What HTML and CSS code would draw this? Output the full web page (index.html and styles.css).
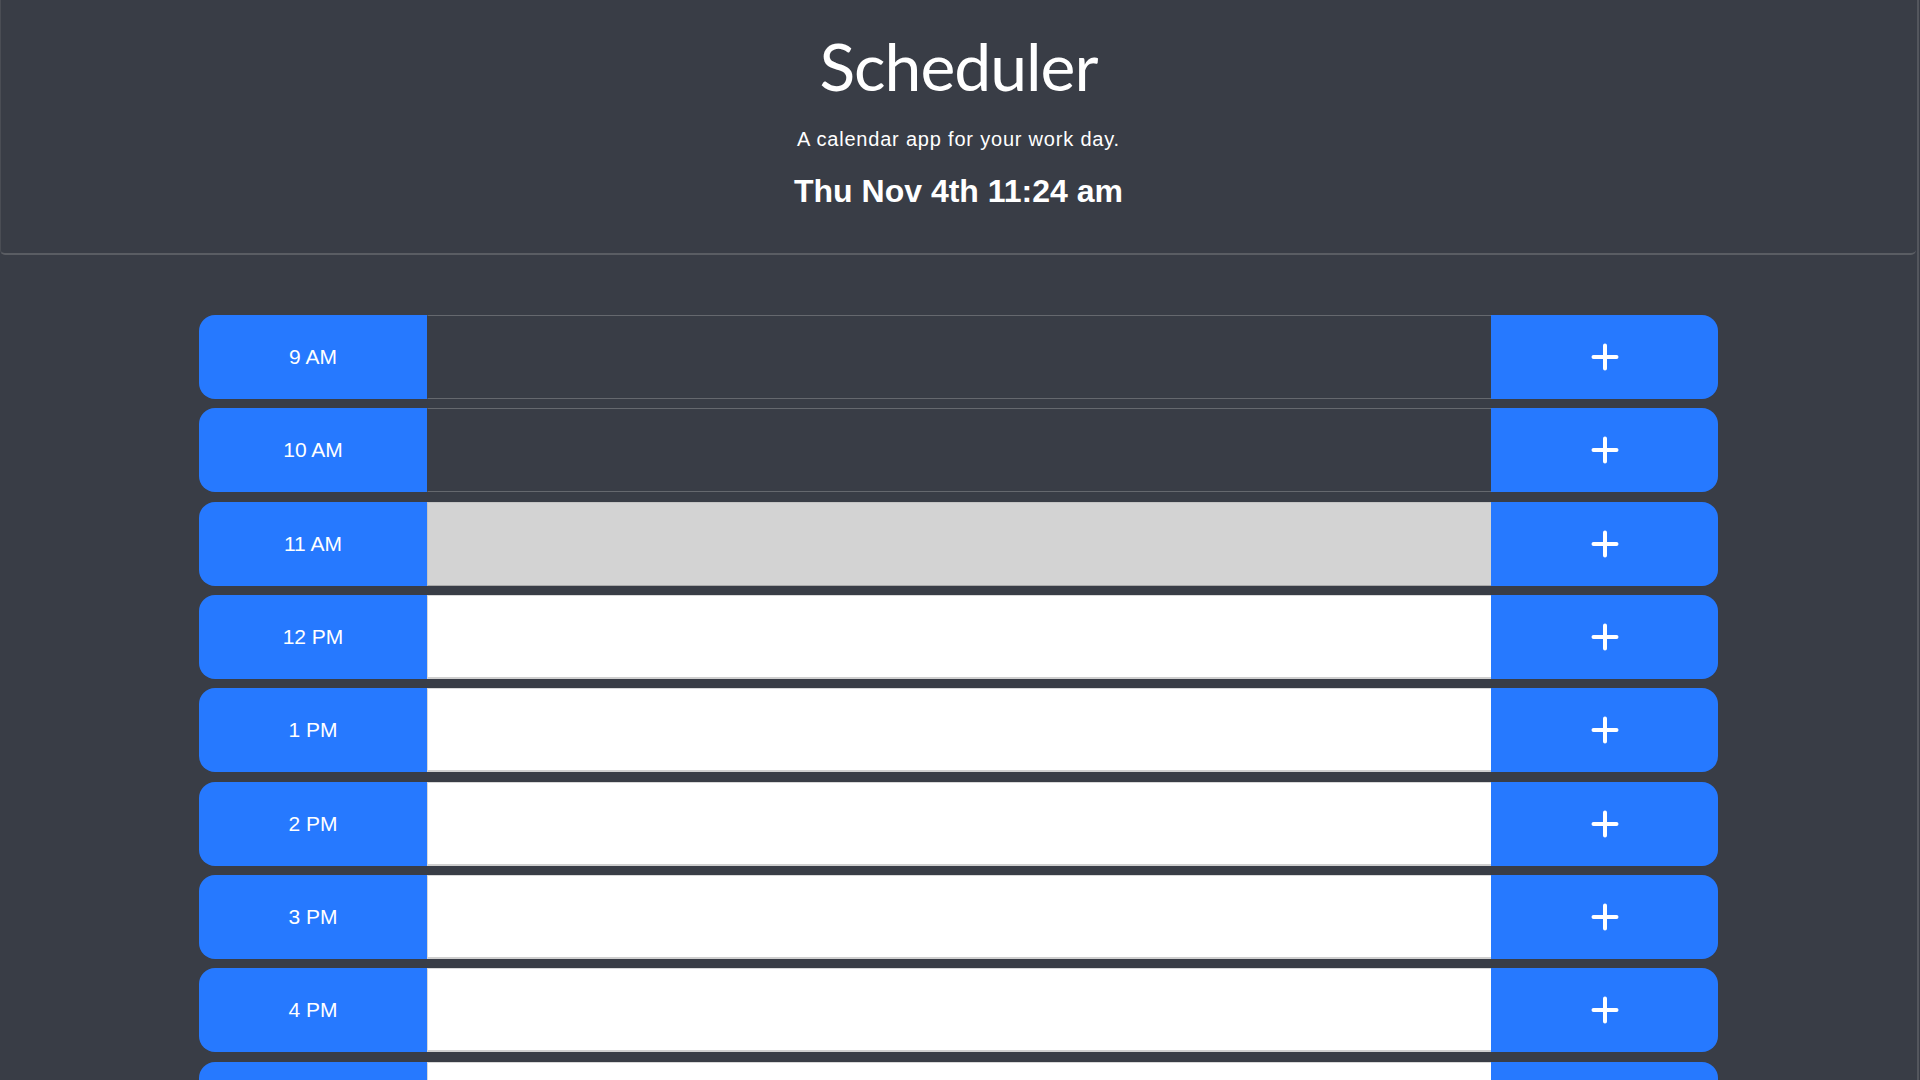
FILE: index.html
```html
<!DOCTYPE html>
<html lang="en">
<head>
<meta charset="utf-8">
<title>Scheduler</title>
<link rel="stylesheet" href="styles.css">
</head>
<body>
<div class="page">
  <header class="jumbo">
    <h1 class="title">Scheduler</h1>
    <p class="lead">A calendar app for your work day.</p>
    <p class="today">Thu Nov 4th 11:24 am</p>
  </header>
  <main class="schedule">
    <div class="row"><div class="hour">9 AM</div><textarea class="desc past"></textarea><button class="save" aria-label="Save"><svg viewBox="0 0 28 28" width="28" height="28"><path d="M14 2.5V25.5M2.5 14H25.5" /></svg></button></div>
    <div class="row"><div class="hour">10 AM</div><textarea class="desc past"></textarea><button class="save" aria-label="Save"><svg viewBox="0 0 28 28" width="28" height="28"><path d="M14 2.5V25.5M2.5 14H25.5" /></svg></button></div>
    <div class="row"><div class="hour">11 AM</div><textarea class="desc present"></textarea><button class="save" aria-label="Save"><svg viewBox="0 0 28 28" width="28" height="28"><path d="M14 2.5V25.5M2.5 14H25.5" /></svg></button></div>
    <div class="row"><div class="hour">12 PM</div><textarea class="desc future"></textarea><button class="save" aria-label="Save"><svg viewBox="0 0 28 28" width="28" height="28"><path d="M14 2.5V25.5M2.5 14H25.5" /></svg></button></div>
    <div class="row"><div class="hour">1 PM</div><textarea class="desc future"></textarea><button class="save" aria-label="Save"><svg viewBox="0 0 28 28" width="28" height="28"><path d="M14 2.5V25.5M2.5 14H25.5" /></svg></button></div>
    <div class="row"><div class="hour">2 PM</div><textarea class="desc future"></textarea><button class="save" aria-label="Save"><svg viewBox="0 0 28 28" width="28" height="28"><path d="M14 2.5V25.5M2.5 14H25.5" /></svg></button></div>
    <div class="row"><div class="hour">3 PM</div><textarea class="desc future"></textarea><button class="save" aria-label="Save"><svg viewBox="0 0 28 28" width="28" height="28"><path d="M14 2.5V25.5M2.5 14H25.5" /></svg></button></div>
    <div class="row"><div class="hour">4 PM</div><textarea class="desc future"></textarea><button class="save" aria-label="Save"><svg viewBox="0 0 28 28" width="28" height="28"><path d="M14 2.5V25.5M2.5 14H25.5" /></svg></button></div>
    <div class="row"><div class="hour">5 PM</div><textarea class="desc future"></textarea><button class="save" aria-label="Save"><svg viewBox="0 0 28 28" width="28" height="28"><path d="M14 2.5V25.5M2.5 14H25.5" /></svg></button></div>
  </main>
</div>
</body>
</html>
```
FILE: styles.css
```css
html, body {
  margin: 0;
  padding: 0;
  background: #393d46;
  overflow: hidden;
}

body {
  font-family: "Liberation Sans", Arial, sans-serif;
  color: #ffffff;
}

.page {
  width: 1919px;
  min-height: 100vh;
  box-sizing: border-box;
  border-right: 2px solid #53565d;
}

.jumbo {
  width: 1916px;
  box-sizing: border-box;
  padding: 26px 0 42px;
  border-bottom: 2px solid #5a5d63;
  border-left: 1px solid #4a4d54;
  border-radius: 0 0 5px 5px;
  text-align: center;
}

.title {
  margin: 0;
  font-family: Lato, "Noto Sans", sans-serif;
  font-weight: 400;
  font-size: 66px;
  letter-spacing: -1px;
  line-height: 80px;
  color: #ffffff;
}

.lead {
  margin: 18px 0 0;
  font-size: 20px;
  letter-spacing: 0.8px;
  line-height: 30px;
  font-weight: 400;
}

.today {
  margin: 17px 0 0;
  font-size: 32px;
  line-height: 40px;
  font-weight: 700;
}

.schedule {
  width: 1519px;
  margin: 60px 0 0 199px;
  display: flex;
  flex-direction: column;
  gap: 9.33px;
}

.row {
  display: grid;
  grid-template-columns: 228px 1fr 227px;
  height: 84px;
}

.hour {
  background: #2679ff;
  border-radius: 16px 0 0 16px;
  display: flex;
  align-items: center;
  justify-content: center;
  font-size: 21px;
  color: #ffffff;
}

.desc {
  margin: 0;
  padding: 8px;
  box-sizing: border-box;
  height: 84px;
  resize: none;
  outline: none;
  font-family: "Liberation Sans", Arial, sans-serif;
  font-size: 18px;
  border-style: solid;
  border-width: 1px 0 1px 1px;
}

.past {
  background: #393d46;
  border-color: #65686e;
  border-left-color: #393d46;
}

.present {
  background: #d3d3d3;
  border-color: #c4c4c4;
  border-bottom-color: #a9a9a9;
}

.future {
  background: #ffffff;
  border-color: #d9d9d9;
  border-bottom: 2px solid #cfcfcf;
}

.save {
  margin: 0;
  padding: 0;
  border: none;
  background: #2679ff;
  border-radius: 0 16px 16px 0;
  display: flex;
  align-items: center;
  justify-content: center;
  cursor: pointer;
}

.save svg {
  display: block;
  fill: none;
  stroke: #ffffff;
  stroke-width: 4;
  stroke-linecap: round;
}
```
